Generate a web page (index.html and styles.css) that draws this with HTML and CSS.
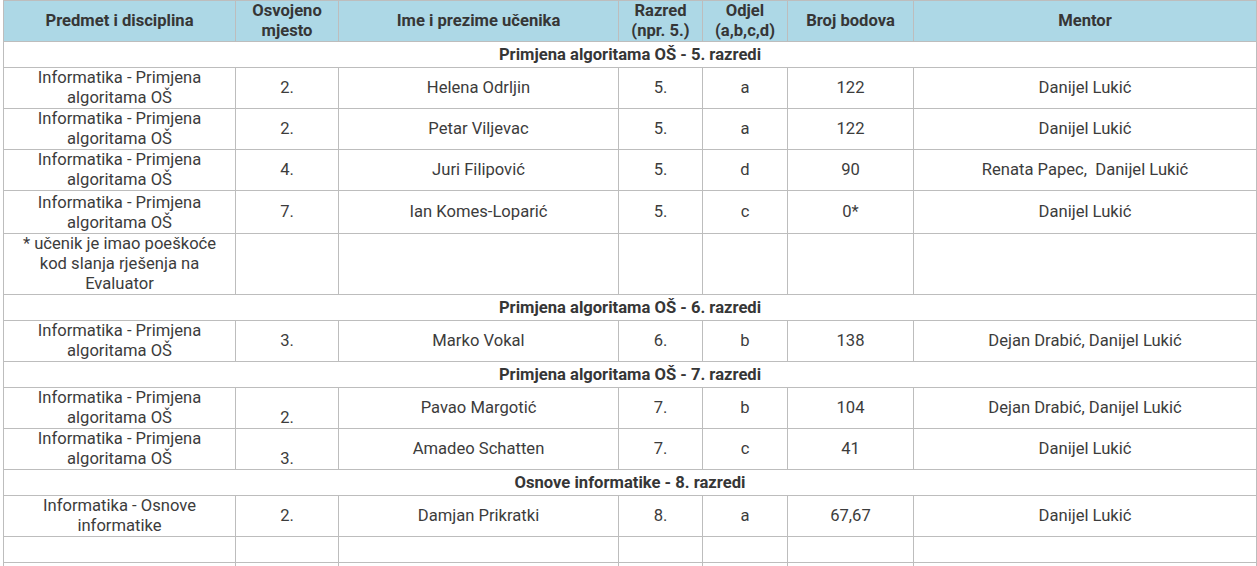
FILE: index.html
```html
<!DOCTYPE html>
<html lang="hr">
<head>
<meta charset="utf-8">
<title>Rezultati</title>
<link rel="stylesheet" href="styles.css">
</head>
<body>
<table class="results">
  <colgroup>
    <col class="c1"><col class="c2"><col class="c3"><col class="c4"><col class="c5"><col class="c6"><col class="c7">
  </colgroup>
  <thead>
    <tr class="head">
      <th>Predmet i disciplina</th>
      <th>Osvojeno<br>mjesto</th>
      <th>Ime i prezime učenika</th>
      <th>Razred<br>(npr. 5.)</th>
      <th>Odjel<br>(a,b,c,d)</th>
      <th>Broj bodova</th>
      <th>Mentor</th>
    </tr>
  </thead>
  <tbody>
    <tr class="sec"><td colspan="7">Primjena algoritama OŠ - 5. razredi</td></tr>
    <tr class="r2"><td>Informatika - Primjena algoritama OŠ</td><td>2.</td><td>Helena Odrljin</td><td>5.</td><td>a</td><td>122</td><td>Danijel Lukić</td></tr>
    <tr class="r2"><td>Informatika - Primjena algoritama OŠ</td><td>2.</td><td>Petar Viljevac</td><td>5.</td><td>a</td><td>122</td><td>Danijel Lukić</td></tr>
    <tr class="r2"><td>Informatika - Primjena algoritama OŠ</td><td>4.</td><td>Juri Filipović</td><td>5.</td><td>d</td><td>90</td><td>Renata Papec,&nbsp; Danijel Lukić</td></tr>
    <tr class="r2b"><td class="bot">Informatika - Primjena algoritama OŠ</td><td>7.</td><td>Ian Komes-Loparić</td><td>5.</td><td>c</td><td>0*</td><td>Danijel Lukić</td></tr>
    <tr class="r3"><td>* učenik je imao poeškoće kod slanja rješenja na Evaluator</td><td></td><td></td><td></td><td></td><td></td><td></td></tr>
    <tr class="sec"><td colspan="7">Primjena algoritama OŠ - 6. razredi</td></tr>
    <tr class="r2"><td>Informatika - Primjena algoritama OŠ</td><td>3.</td><td>Marko Vokal</td><td>6.</td><td>b</td><td>138</td><td>Dejan Drabić, Danijel Lukić</td></tr>
    <tr class="sec"><td colspan="7">Primjena algoritama OŠ - 7. razredi</td></tr>
    <tr class="r2"><td>Informatika - Primjena algoritama OŠ</td><td class="bot">2.</td><td>Pavao Margotić</td><td>7.</td><td>b</td><td>104</td><td>Dejan Drabić, Danijel Lukić</td></tr>
    <tr class="r2"><td>Informatika - Primjena algoritama OŠ</td><td class="bot">3.</td><td>Amadeo Schatten</td><td>7.</td><td>c</td><td>41</td><td>Danijel Lukić</td></tr>
    <tr class="sec"><td colspan="7">Osnove informatike - 8. razredi</td></tr>
    <tr class="r2"><td>Informatika - Osnove informatike</td><td>2.</td><td>Damjan Prikratki</td><td>8.</td><td>a</td><td>67,67</td><td>Danijel Lukić</td></tr>
    <tr class="r1"><td></td><td></td><td></td><td></td><td></td><td></td><td></td></tr>
    <tr class="r1"><td></td><td></td><td></td><td></td><td></td><td></td><td></td></tr>
  </tbody>
</table>
</body>
</html>
```

FILE: styles.css
```css
html, body {
  margin: 0;
  padding: 0;
  background: #ffffff;
}
body {
  font-family: Roboto, "Liberation Sans", Arial, sans-serif;
  font-size: 16.6px;
  line-height: 20px;
  color: #3c3c3c;
}
.results {
  margin: 0 0 0 3px;
  border-collapse: collapse;
  table-layout: fixed;
  width: 1253px;
}
.c1 { width: 232px; }
.c2 { width: 103px; }
.c3 { width: 280px; }
.c4 { width: 84px; }
.c5 { width: 85px; }
.c6 { width: 126px; }
.c7 { width: 343px; }
.results th,
.results td {
  border: 1px solid #bdbdbd;
  padding: 0 8px;
  text-align: center;
  vertical-align: middle;
  overflow: hidden;
}
.results th {
  background: #add8e6;
  font-weight: 700;
  color: #363636;
}
.head th { height: 40px; }
.sec td {
  height: 25px;
  font-weight: 700;
  color: #363636;
}
.r1 td { height: 25px; }
.r2 td { height: 40px; }
.r2b td { height: 42px; }
.r3 td { height: 60px; }
.results td.bot { vertical-align: bottom; }
```
